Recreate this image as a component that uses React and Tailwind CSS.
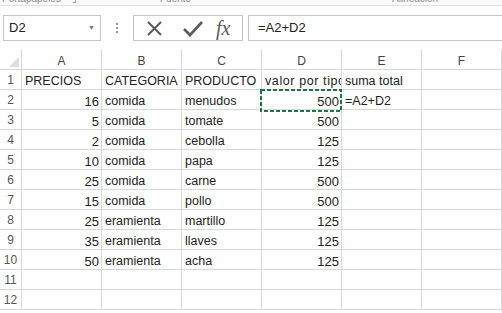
import React from 'react';

const columns = ['A', 'B', 'C', 'D', 'E', 'F'];

// each row: [A, B, C, D, E]
const rows = [
  ['PRECIOS', 'CATEGORIA', 'PRODUCTO', 'valor por tipo', 'suma total'],
  [16, 'comida', 'menudos', 500, '=A2+D2'],
  [5, 'comida', 'tomate', 500, ''],
  [2, 'comida', 'cebolla', 125, ''],
  [10, 'comida', 'papa', 125, ''],
  [25, 'comida', 'carne', 500, ''],
  [15, 'comida', 'pollo', 500, ''],
  [25, 'eramienta', 'martillo', 125, ''],
  [35, 'eramienta', 'llaves', 125, ''],
  [50, 'eramienta', 'acha', 125, ''],
  ['', '', '', '', ''],
  ['', '', '', '', ''],
];

const Cell = ({ value, wide }) => {
  const isNum = typeof value === 'number';
  return (
    <div
      className={`h-[20px] border-r border-b border-[#d8d8d8] overflow-hidden whitespace-nowrap pt-[4px] leading-[15px] text-[12.5px] text-[#222] ${
        isNum ? 'text-right pr-[2px] text-[13px]' : 'text-left pl-[3px]'
      } ${wide ? 'tracking-[0.6px]' : ''}`}
    >
      {value}
    </div>
  );
};

const App = () => {
  return (
    <div className="w-[502px] h-[313px] overflow-hidden bg-white font-['Liberation_Sans',Arial,sans-serif] relative">
      {/* ribbon group labels, cut off at the top */}
      <div className="h-[6px] overflow-hidden border-b border-[#e1e1e1] bg-[#fafafa] relative text-[10px] text-[#8a8a8a] leading-[10px]">
        <div className="flex -mt-[6px]">
          <span className="ml-[2px] w-[158px]">Portapapeles&nbsp;&nbsp;&nbsp;&nbsp;⌟</span>
          <span className="w-[232px]">Fuente</span>
          <span>Alineación</span>
        </div>
      </div>

      {/* formula bar */}
      <div className="mt-[9px] h-[26px] flex items-stretch">
        <div className="ml-[3px] w-[98px] border border-[#c6c6c6] flex items-center justify-between px-[5px] text-[13px] text-[#222]">
          <span>D2</span>
          <span className="text-[7px] text-[#777]">▼</span>
        </div>
        <div className="w-[32px] flex flex-col items-center justify-center gap-[2px]">
          <span className="w-[2px] h-[2px] bg-[#9a9a9a]" />
          <span className="w-[2px] h-[2px] bg-[#9a9a9a]" />
          <span className="w-[2px] h-[2px] bg-[#9a9a9a]" />
        </div>
        <div className="w-[110px] border border-[#c6c6c6] flex items-center">
          <svg width="38" height="24" viewBox="0 0 38 24" className="ml-[2px]">
            <path d="M12 6 L25 19 M25 6 L12 19" stroke="#5a5a5a" strokeWidth="2" fill="none" />
          </svg>
          <svg width="36" height="24" viewBox="0 0 36 24">
            <path d="M10 13 L16 19 L28 6" stroke="#5a5a5a" strokeWidth="2.6" fill="none" />
          </svg>
          <span className="ml-[6px] font-['Liberation_Serif',serif] italic text-[20px] text-[#5a5a5a] leading-none">
            fx
          </span>
        </div>
        <div className="ml-[5px] flex-1 border border-r-0 border-[#c6c6c6] flex items-center pl-[9px] text-[13px] text-[#222]">
          =A2+D2
        </div>
      </div>

      {/* sheet */}
      <div className="mt-[9px] grid grid-cols-[22px_80px_80px_80px_80px_80px_80px]">
        <div className="h-[20px] border-r border-b border-[#d8d8d8] relative">
          <svg width="10" height="10" viewBox="0 0 10 10" className="absolute right-[2px] bottom-[2px]">
            <path d="M10 0 L10 10 L0 10 Z" fill="#dcdcdc" />
          </svg>
        </div>
        {columns.map((c) => (
          <div
            key={c}
            className="h-[20px] border-r border-b border-[#d8d8d8] flex items-center justify-center pt-[2px] text-[12px] text-[#444]"
          >
            {c}
          </div>
        ))}

        {rows.map((r, i) => (
          <React.Fragment key={i}>
            <div className="h-[20px] border-r border-b border-[#d8d8d8] flex items-center justify-center text-[12px] text-[#555]">
              {i + 1}
            </div>
            {r.map((v, j) => (
              <Cell key={j} value={v} wide={i === 0 && j === 3} />
            ))}
            <Cell value="" />
          </React.Fragment>
        ))}
      </div>

      {/* copy marquee around D2 */}
      <svg width="82" height="23" className="absolute left-[260px] top-[89px]">
        <rect x="1" y="1" width="80" height="21" fill="none" stroke="#217346" strokeWidth="2" strokeDasharray="4 2" />
      </svg>
    </div>
  );
};

export default App;
